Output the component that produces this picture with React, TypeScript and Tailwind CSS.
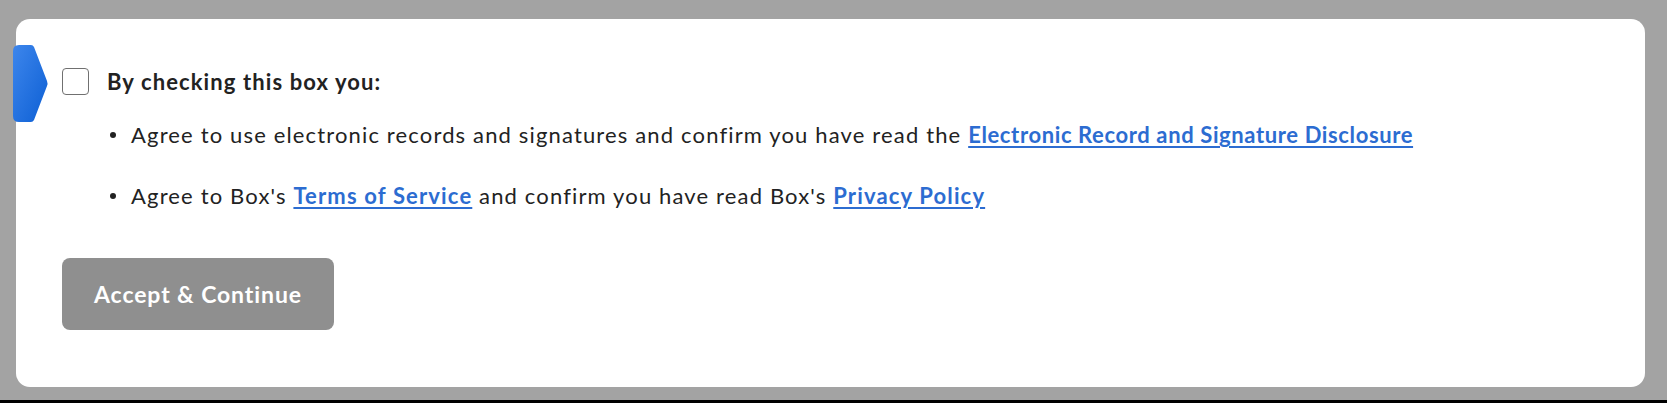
import React from "react";

function Marker() {
  return (
    <svg
      className="absolute left-[-3px] top-[26px]"
      width="35"
      height="77"
      viewBox="0 0 35 77"
    >
      <defs>
        <linearGradient id="mk" x1="0" y1="0" x2="1" y2="1">
          <stop offset="0" stopColor="#3d86ec" />
          <stop offset="1" stopColor="#0d5fd4" />
        </linearGradient>
      </defs>
      <path
        d="M6 0 H18 Q20 0 21 2 L34 36 Q35 38.5 34 41 L21 75 Q20 77 18 77 H6 Q0 77 0 71 V6 Q0 0 6 0 Z"
        fill="url(#mk)"
      />
    </svg>
  );
}

function Bullet({ children }: { children: React.ReactNode }) {
  return (
    <li className="flex items-center leading-[30px]">
      <span className="ml-[48px] mr-[15px] h-[6px] w-[6px] shrink-0 rounded-full bg-[#222]" />
      <span>{children}</span>
    </li>
  );
}

function Link({ children, wide }: { children: React.ReactNode; wide?: boolean }) {
  return (
    <a
      href="#"
      className={`font-bold text-[#2c6cd1] underline decoration-2 underline-offset-[3px] ${
        wide ? "tracking-[1.15px]" : "tracking-[0.62px]"
      }`}
    >
      {children}
    </a>
  );
}

export default function App() {
  return (
    <div className="flex h-[403px] flex-col bg-[#a3a3a3] font-['Lato','Liberation_Sans',sans-serif] text-[#222]">
      <div className="pl-4 pr-[22px] pt-[19px]">
        <div className="relative h-[368px] rounded-[14px] bg-white pl-[46px] pt-[49px]">
          <Marker />

          {/* consent checkbox */}
          <label className="flex items-center gap-[18px]">
            <span className="h-[27px] w-[27px] rounded-[4px] border-[1.5px] border-[#707070] bg-white" />
            <span className="text-[22px] font-bold leading-[27px] tracking-[1.1px]">
              By checking this box you:
            </span>
          </label>

          <ul className="mt-[25px] space-y-[31px] text-[22px] tracking-[1.15px]">
            <Bullet>
              Agree to use electronic records and signatures and confirm you have read the{" "}
              <Link>Electronic Record and Signature Disclosure</Link>
            </Bullet>
            <Bullet>
              Agree to Box's <Link wide>Terms of Service</Link> and confirm you have read Box's{" "}
              <Link wide>Privacy Policy</Link>
            </Bullet>
          </ul>

          <button
            type="button"
            className="mt-[47px] h-[72px] w-[272px] rounded-[8px] bg-[#8f8f8f] text-[23px] font-bold tracking-[0.9px] text-white"
          >
            Accept &amp; Continue
          </button>
        </div>
      </div>
      <div className="flex-1" />
      <div className="h-[3px] bg-black" />
    </div>
  );
}
